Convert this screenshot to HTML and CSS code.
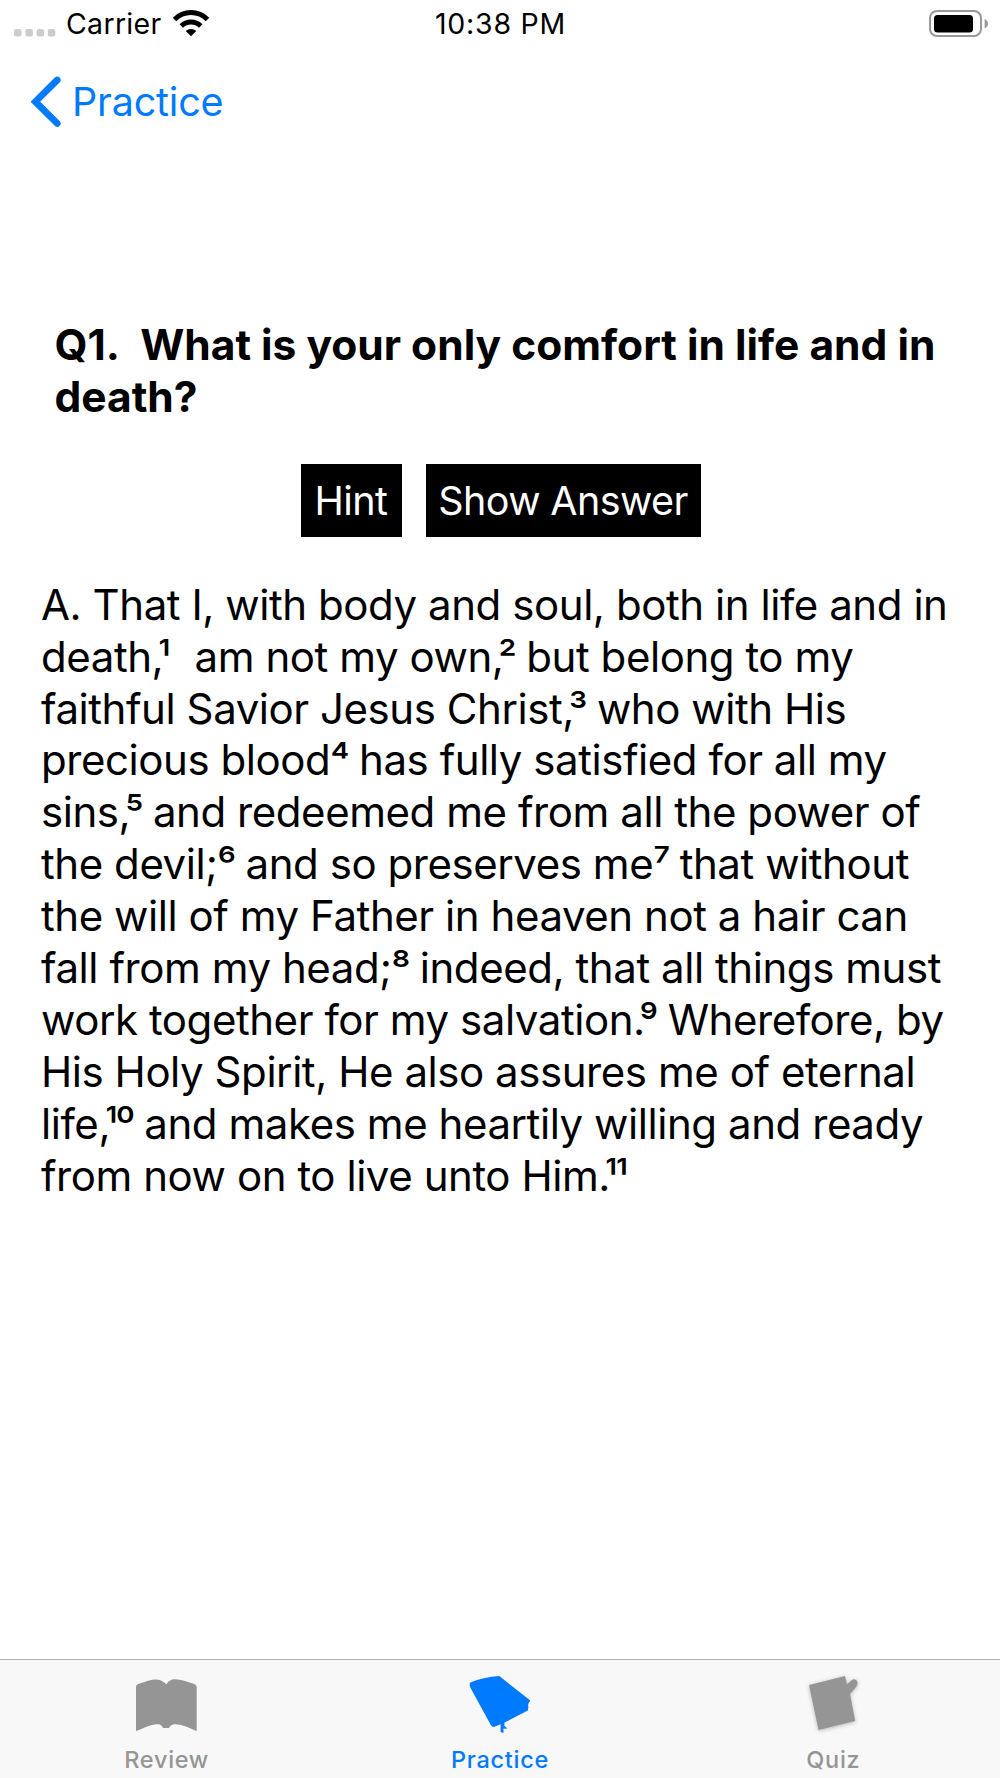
FILE: index.html
```html
<!DOCTYPE html>
<html lang="en">
  <head>
    <meta charset="UTF-8" />
    <title>Practice</title>
    <link rel="stylesheet" href="styles.css">
  </head>

  <body>
    <div class="statusBar">
      <div class="carrier">
        <svg class="signal" width="42" height="8" viewBox="0 0 42 8">
          <rect x="0" y="0" width="7.5" height="7.5" rx="2.2" />
          <rect x="11.4" y="0" width="7.5" height="7.5" rx="2.2" />
          <rect x="22.6" y="0" width="7.5" height="7.5" rx="2.2" />
          <rect x="33.8" y="0" width="7.5" height="7.5" rx="2.2" />
        </svg>
        <span class="carrierName">Carrier</span>
        <svg class="wifi" width="38" height="28" viewBox="0 0 38 28">
          <path d="M2.5 10.4 A23.2 23.2 0 0 1 35.5 10.4" />
          <path d="M9.3 17 A14 14 0 0 1 28.7 17" />
          <path class="wifiDot" d="M13.7 22 A7.8 7.8 0 0 1 24.3 22 L19 27.3 Z" />
        </svg>
      </div>
      <div class="time">10:38 PM</div>
      <svg class="battery" width="60" height="28" viewBox="0 0 60 28">
        <rect class="batteryCase" x="1" y="1" width="51" height="25" rx="7" />
        <rect x="5" y="5" width="39" height="17.6" rx="3.6" />
        <path class="batteryCap" d="M55.6 9 Q59 10.6 59 13.7 Q59 16.8 55.6 18.4 Z" />
      </svg>
    </div>

    <div class="navBar">
      <a class="back">
        <svg width="32" height="52" viewBox="0 0 32 52">
          <path d="M27.2 4 L5.4 25.7 L27.2 47.4" />
        </svg>
        <span>Practice</span>
      </a>
    </div>

    <main class="content">
      <h1 class="question">Q1.&nbsp; What is your only comfort in life and in death?</h1>

      <div class="buttons">
        <button class="hintButton">Hint</button>
        <button class="answerButton">Show Answer</button>
      </div>

      <p class="answer">
        A. That I, with body and soul, both in life and in<br />
        death<span class="tight">,</span><span class="note first">¹</span>&nbsp; am not my own<span class="tight">,</span><span class="note">²</span> but belong to my<br />
        faithful Savior Jesus Christ<span class="tight">,</span><span class="note">³</span> who with His<br />
        precious blood<span class="note">⁴</span> has fully satisfied for all my<br />
        sins<span class="tight">,</span><span class="note">⁵</span> and redeemed me from all the power of<br />
        the devil;<span class="note">⁶</span> and so preserves me<span class="note">⁷</span> that without<br />
        the will of my Father in heaven not a hair can<br />
        fall from my head;<span class="note">⁸</span> indeed, that all things must<br />
        work together for my salvation<span class="tight">.</span><span class="note">⁹</span> Wherefore, by<br />
        His Holy Spirit, He also assures me of eternal<br />
        life<span class="tight">,</span><span class="note">¹⁰</span> and makes me heartily willing and ready<br />
        from now on to live unto Him<span class="tight">.</span><span class="note">¹¹</span>
      </p>
    </main>

    <nav class="tabBar">
      <a class="tab">
        <svg width="70" height="64" viewBox="1 0 70 64">
          <path d="M5 17 Q5 14.5 8 13.7 C17 10.5 25 7.8 30 10.5 Q33 12 35.3 14.3 Q37 11 41 9.5 C47 8 55 11.5 62.5 13.7 Q65.7 14.8 65.7 17 V61 C56 57 49 53.5 42 54.5 Q39 55.3 38 58 H32 Q31 55 28 54.3 C20 53.5 13 58.5 5 61 Z" />
        </svg>
        <span>Review</span>
      </a>
      <a class="tab active">
        <svg width="70" height="64" viewBox="3.2 0 70 64">
          <path d="M8.5 12.5 C17 9 27 6.5 37.5 6 L68.5 30.5 Q65.5 34 66.6 37 L66 40.5 L42.5 52.7 L42.7 56 L45.8 58.5 L41.6 58.8 L41.8 63 L38.8 62 L38.8 54.2 L32 57 Q30 57 29 55 L8.5 17.5 Q7.3 14.8 8.5 12.5 Z" />
        </svg>
        <span>Practice</span>
      </a>
      <a class="tab quizTab">
        <svg width="70" height="64" viewBox="0 0 70 64">
          <path d="M11 15 L47 6 L49 14.2 L53.2 10.5 Q57 8 59 11 Q60.6 14 58 17 L52 24 L57.2 51 L20.5 60 Z" />
        </svg>
        <span>Quiz</span>
      </a>
    </nav>
  </body>
</html>
```

FILE: styles.css
```css
* {
  box-sizing: border-box;
}

body {
  margin: 0;
  height: 1778px;
  display: flex;
  flex-direction: column;
  background-color: #fff;
  color: #000;
  font-family: Inter, "Liberation Sans", sans-serif;
}

.statusBar {
  display: grid;
  grid-template-columns: 1fr auto 1fr;
  height: 48px;
  padding: 0 11px 0 14px;
  font-size: 28.5px;
  line-height: 48px;
}

.carrier {
  display: flex;
}

.signal {
  margin-top: 29px;
  fill: #ccc;
}

.carrierName {
  margin-left: 10px;
  letter-spacing: 0.3px;
}

.time {
  padding-right: 2px;
  letter-spacing: 0.75px;
}

.wifi {
  margin: 9px 0 0 10px;
}

.wifi path {
  fill: none;
  stroke: #000;
  stroke-width: 5;
}

.wifi .wifiDot {
  fill: #000;
  stroke: none;
}

.battery {
  justify-self: end;
  margin-top: 10px;
}

.batteryCase {
  fill: none;
  stroke: #999;
  stroke-width: 2;
}

.batteryCap {
  fill: #999;
}

.navBar {
  height: 271px;
  padding: 28px 0 0 30px;
}

.back {
  display: flex;
  color: #007aff;
  font-size: 39.5px;
  line-height: 52px;
  letter-spacing: -0.2px;
}

.back svg {
  margin-right: 10px;
}

.back path {
  fill: none;
  stroke: #007aff;
  stroke-width: 6.8;
  stroke-linecap: round;
}

.content {
  flex: 1;
}

.question {
  margin: 0 48px 0 54.5px;
  font-size: 42.5px;
  line-height: 51.87px;
}

.buttons {
  display: flex;
  gap: 24px;
  margin: 41px 0 0 301px;
}

button {
  height: 73px;
  padding: 2px 1px 0 0;
  border: 0;
  background-color: #000;
  color: #fff;
  font-family: inherit;
  font-size: 39.5px;
  letter-spacing: -0.6px;
}

.hintButton {
  width: 101px;
}

.answerButton {
  width: 275px;
}

.answer {
  margin: 42px 0 0 41px;
  font-size: 42px;
  line-height: 51.9px;
  letter-spacing: -0.44px;
  white-space: nowrap;
}

/* footnote numbers */
.note {
  line-height: 0;
  letter-spacing: -2px;
  vertical-align: -2px;
}

.first {
  letter-spacing: 1px;
}

/* pulls the footnote number over the comma or period before it */
.tight {
  letter-spacing: -5.6px;
}

.tabBar {
  display: flex;
  height: 119px;
  border-top: 1px solid #b2b2b2;
  background-color: #f8f8f8;
}

.tab {
  flex: 1;
  display: flex;
  flex-direction: column;
  align-items: center;
  color: #959595;
  fill: #959595;
  font-size: 23.5px;
  font-weight: 500;
  letter-spacing: 0.7px;
  line-height: 30px;
}

.tab svg {
  margin: 10px 0 11px;
}

.active {
  color: #007aff;
  fill: #007aff;
}

.quizTab svg {
  filter: drop-shadow(0 1px 2px rgba(0, 0, 0, 0.25));
}
```
